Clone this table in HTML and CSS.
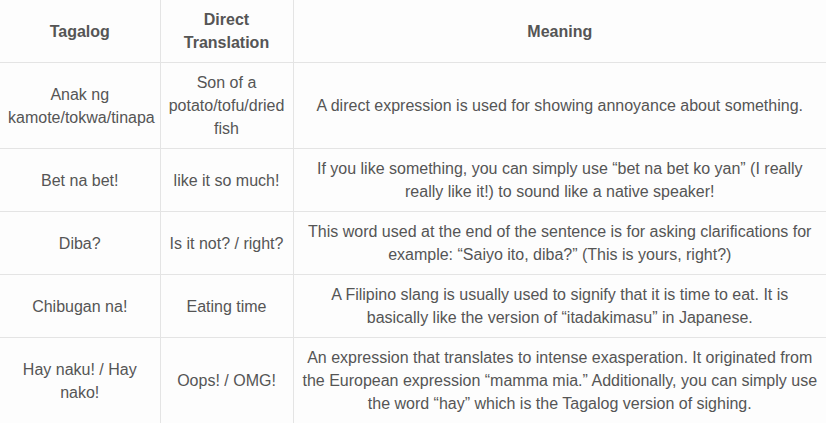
FILE: index.html
```html
<!DOCTYPE html>
<html>
<head>
<meta charset="utf-8">
<link rel="stylesheet" href="styles.css">
</head>
<body>
<table class="slang">
  <colgroup>
    <col class="c1">
    <col class="c2">
    <col class="c3">
  </colgroup>
  <thead>
    <tr>
      <th>Tagalog</th>
      <th>Direct Translation</th>
      <th>Meaning</th>
    </tr>
  </thead>
  <tbody>
    <tr>
      <td>Anak ng kamote/tokwa/tinapa</td>
      <td>Son of a potato/tofu/dried fish</td>
      <td>A direct expression is used for showing annoyance about something.</td>
    </tr>
    <tr>
      <td>Bet na bet!</td>
      <td>like it so much!</td>
      <td>If you like something, you can simply use “bet na bet ko yan” (I really really like it!) to sound like a native speaker!</td>
    </tr>
    <tr>
      <td>Diba?</td>
      <td>Is it not? / right?</td>
      <td>This word used at the end of the sentence is for asking clarifications for example: “Saiyo ito, diba?” (This is yours, right?)</td>
    </tr>
    <tr>
      <td>Chibugan na!</td>
      <td>Eating time</td>
      <td>A Filipino slang is usually used to signify that it is time to eat. It is basically like the version of “itadakimasu” in Japanese.</td>
    </tr>
    <tr>
      <td>Hay naku! / Hay nako!</td>
      <td>Oops! / OMG!</td>
      <td>An expression that translates to intense exasperation. It originated from the European expression “mamma mia.” Additionally, you can simply use the word “hay” which is the Tagalog version of sighing.</td>
    </tr>
  </tbody>
</table>
</body>
</html>
```
FILE: styles.css
```css
html, body {
  margin: 0;
  padding: 0;
  background: #fdfdfd;
}
.slang {
  width: 826px;
  border-collapse: collapse;
  table-layout: fixed;
  font-family: "Liberation Sans", Arial, sans-serif;
  font-size: 16px;
  line-height: 23px;
  color: #555555;
}
.c1 { width: 160px; }
.c2 { width: 133px; }
.c3 { width: 533px; }
.slang th,
.slang td {
  border: 1px solid #e4e4e4;
  padding: 8px 8px;
  text-align: center;
  vertical-align: middle;
}
.slang th {
  font-weight: bold;
}
.slang tr > :first-child { border-left: none; }
.slang tr > :last-child { border-right: none; }
.slang thead th { border-top: none; }
```
